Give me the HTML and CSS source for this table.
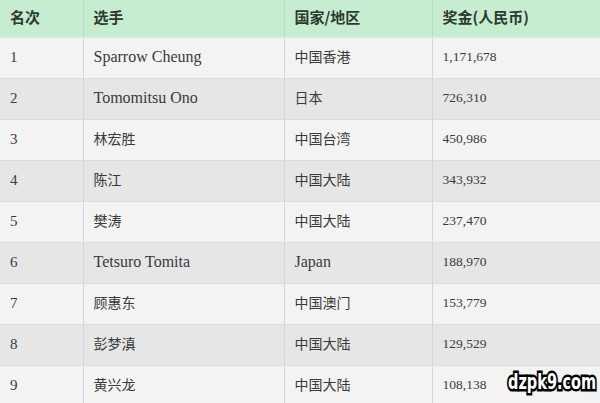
FILE: index.html
```html
<!DOCTYPE html>
<html>
<head>
<meta charset="utf-8">
<link rel="stylesheet" href="styles.css">
</head>
<body>
<div class="wrap">
<table class="rank">
<colgroup><col class="c1"><col class="c2"><col class="c3"><col class="c4"></colgroup>
<thead>
<tr><th>名次</th><th>选手</th><th>国家/地区</th><th>奖金(人民币)</th></tr>
</thead>
<tbody>
<tr><td class="num">1</td><td class="lat">Sparrow Cheung</td><td>中国香港</td><td class="num">1,171,678</td></tr>
<tr><td class="num">2</td><td class="lat">Tomomitsu Ono</td><td>日本</td><td class="num">726,310</td></tr>
<tr><td class="num">3</td><td>林宏胜</td><td>中国台湾</td><td class="num">450,986</td></tr>
<tr><td class="num">4</td><td>陈江</td><td>中国大陆</td><td class="num">343,932</td></tr>
<tr><td class="num">5</td><td>樊涛</td><td>中国大陆</td><td class="num">237,470</td></tr>
<tr><td class="num">6</td><td class="lat">Tetsuro Tomita</td><td class="lat">Japan</td><td class="num">188,970</td></tr>
<tr><td class="num">7</td><td>顾惠东</td><td>中国澳门</td><td class="num">153,779</td></tr>
<tr><td class="num">8</td><td>彭梦滇</td><td>中国大陆</td><td class="num">129,529</td></tr>
<tr><td class="num">9</td><td>黄兴龙</td><td>中国大陆</td><td class="num">108,138</td></tr>
</tbody>
</table>
<div class="mark">dzpk9.com</div>
</div>
</body>
</html>
```
FILE: styles.css
```css
html, body { margin: 0; padding: 0; background: #fff; }
.wrap { position: relative; width: 600px; height: 403px; overflow: hidden; }
.rank {
  border-collapse: collapse;
  table-layout: fixed;
  width: 601px;
  font-family: "Noto Sans CJK SC", "Noto Sans", sans-serif;
  color: #333;
}
.c1 { width: 83px; }
.c2 { width: 201px; }
.c3 { width: 148px; }
.c4 { width: 169px; }
.rank th {
  height: 37px;
  padding: 0 0 3px 10px;
  text-align: left;
  background: #c6edcf;
  font-size: 15px;
  font-weight: bold;
  color: #2e3a2f;
  border-left: 1px solid #b8e0c2;
  border-bottom: 1px solid #d8ecdc;
  box-sizing: border-box;
}
.rank th:first-child { border-left: 0; }
.rank td {
  height: 41px;
  padding: 0 0 3px 10px;
  box-sizing: border-box;
  font-size: 14px;
  color: #3a3a3a;
  border-left: 1px solid #d6d6d6;
  border-top: 1px solid #dcdcdc;
}
.rank td:first-child { border-left: 0; }
.rank tbody tr:nth-child(odd) td { background: #f3f3f3; }
.rank tbody tr:nth-child(even) td { background: #e6e6e6; }
.rank td.lat { font-family: "Liberation Serif", "Times New Roman", serif; font-size: 16px; padding-bottom: 1px; }
.rank td.num { font-family: "Liberation Serif", "Times New Roman", serif; font-size: 13.5px; padding-bottom: 1px; }
.rank td:first-child.num { font-size: 15px; }
.mark {
  position: absolute;
  left: 508px;
  top: 369px;
  font-family: "DejaVu Sans", sans-serif;
  font-weight: bold;
  font-size: 22px;
  line-height: 26px;
  color: #fff;
  -webkit-text-stroke: 5px #000;
  paint-order: stroke fill;
  transform: scaleX(0.66);
  transform-origin: left center;
  white-space: nowrap;
}
```
